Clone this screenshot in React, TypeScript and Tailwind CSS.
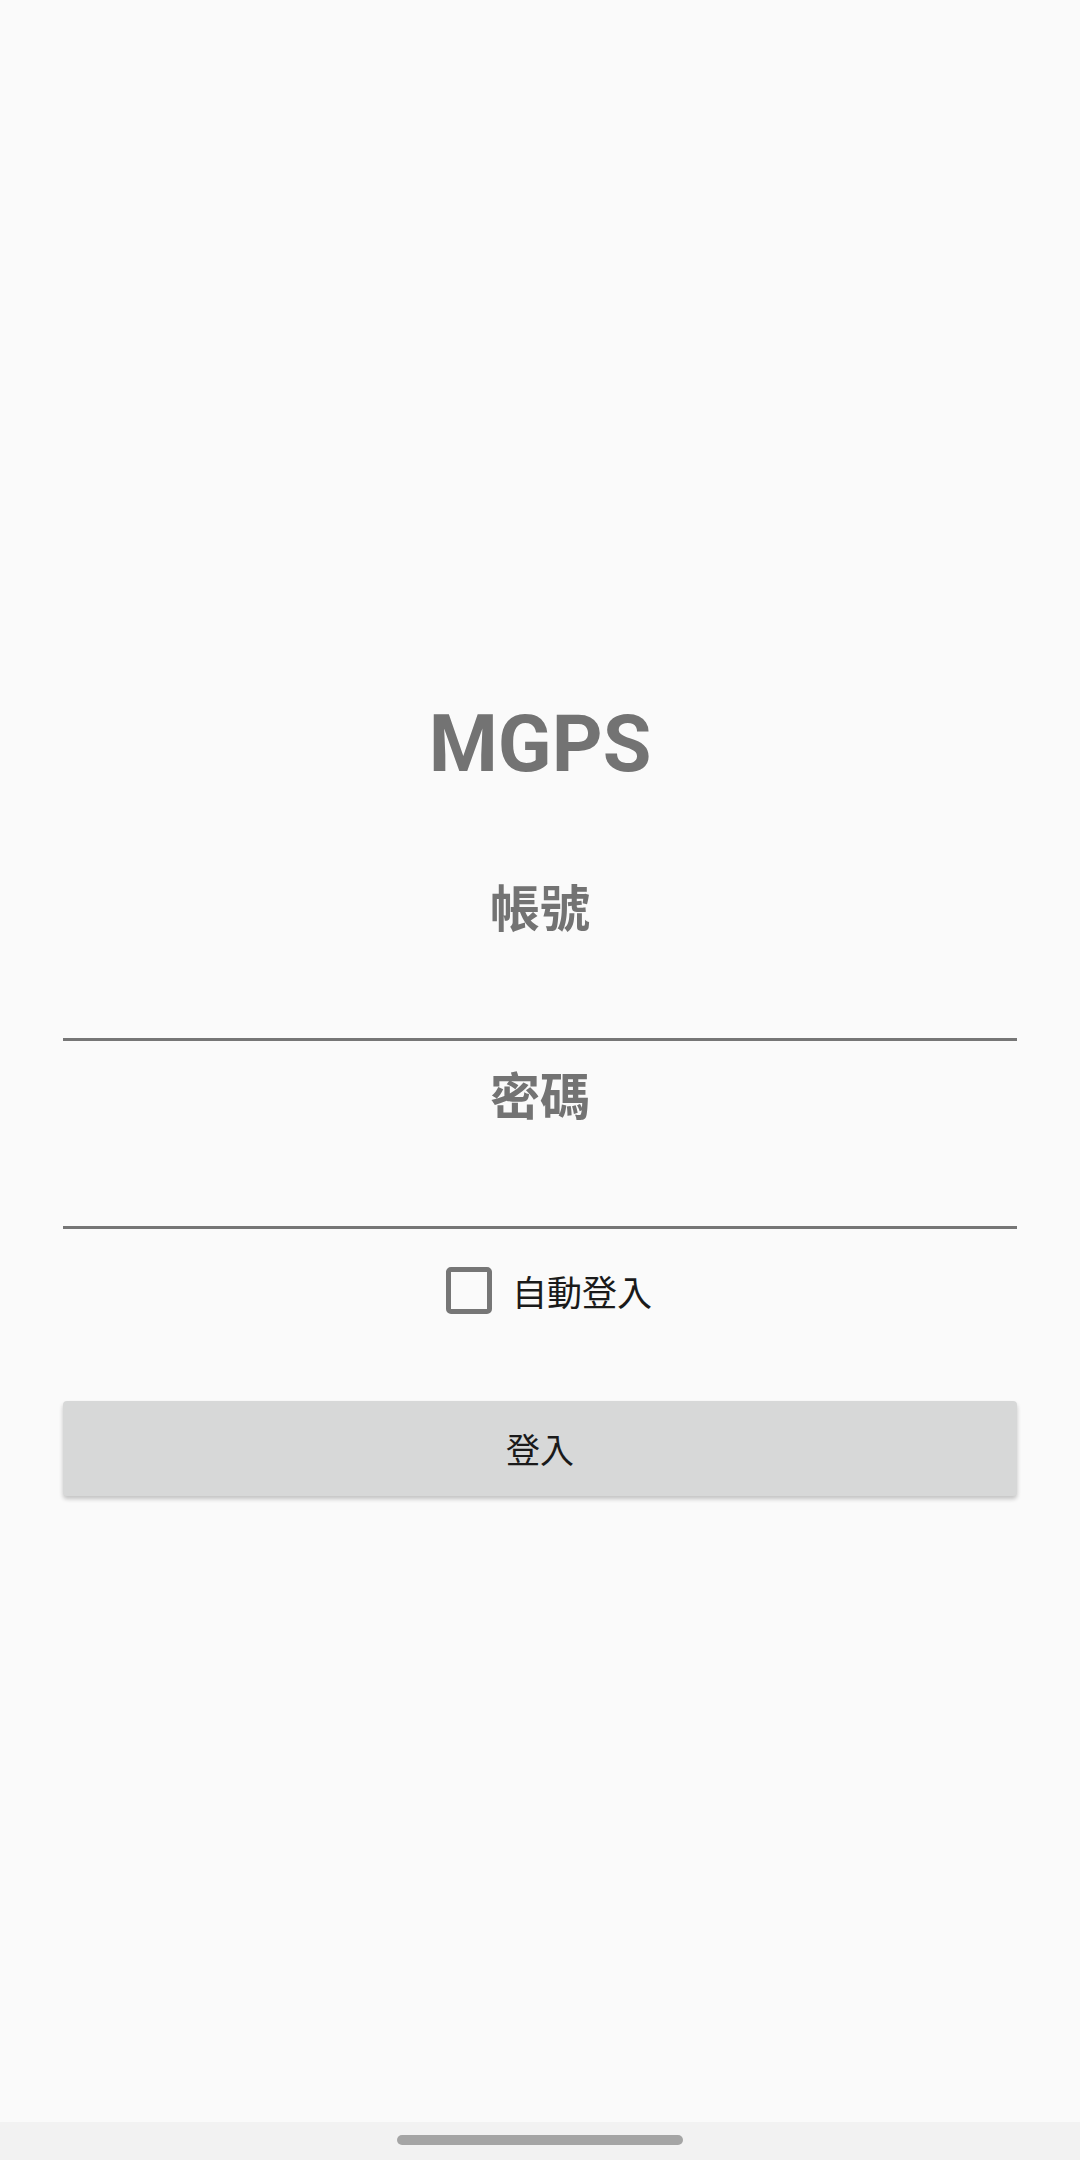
import React from "react";

export default function App() {
  const cjk = { fontFamily: '"Noto Sans CJK TC", "Noto Sans", sans-serif' };
  return (
    <div className="w-[1080px] h-[2160px] bg-[#fafafa] flex flex-col overflow-hidden">
      <div className="flex-1 flex flex-col pt-[704px]">
        <div
          className="h-[80px] leading-[80px] text-center text-[79px] font-bold text-[#737373]"
          style={{ fontFamily: 'Roboto, "Liberation Sans", sans-serif' }}
        >
          MGPS
        </div>
        <div
          className="mt-[96px] h-[50px] leading-[50px] text-center text-[50px] font-bold text-[#737373]"
          style={cjk}
        >
          帳號
        </div>
        <div className="h-[108px]" />
        <div className="mx-[63px] h-[3px] bg-[#767676]" />
        <div
          className="mt-[27px] h-[50px] leading-[50px] text-center text-[50px] font-bold text-[#737373]"
          style={cjk}
        >
          密碼
        </div>
        <div className="h-[108px]" />
        <div className="mx-[63px] h-[3px] bg-[#767676]" />
        <div className="mt-[38px] h-[47px] flex items-center justify-center pl-[18px]">
          <div className="w-[46px] h-[47px] border-[5px] border-[#767676] rounded-[5px] box-border" />
          <span
            className="ml-[20px] text-[35px] leading-[47px] text-[#1a1a1a]"
            style={cjk}
          >
            自動登入
          </span>
        </div>
        <div className="mt-[87px] mx-[63px] h-[95px] bg-[#d7d8d8] rounded-[4px] shadow-[0_3px_4px_rgba(0,0,0,0.22)] flex items-center justify-center">
          <span className="text-[34px] leading-[34px] text-[#1a1a1a]" style={cjk}>
            登入
          </span>
        </div>
      </div>
      <div className="h-[38px] bg-[#f2f2f2] flex justify-center pt-[13px]">
        <div className="w-[286px] h-[10px] rounded-full bg-[#a5a5a5]" />
      </div>
    </div>
  );
}
